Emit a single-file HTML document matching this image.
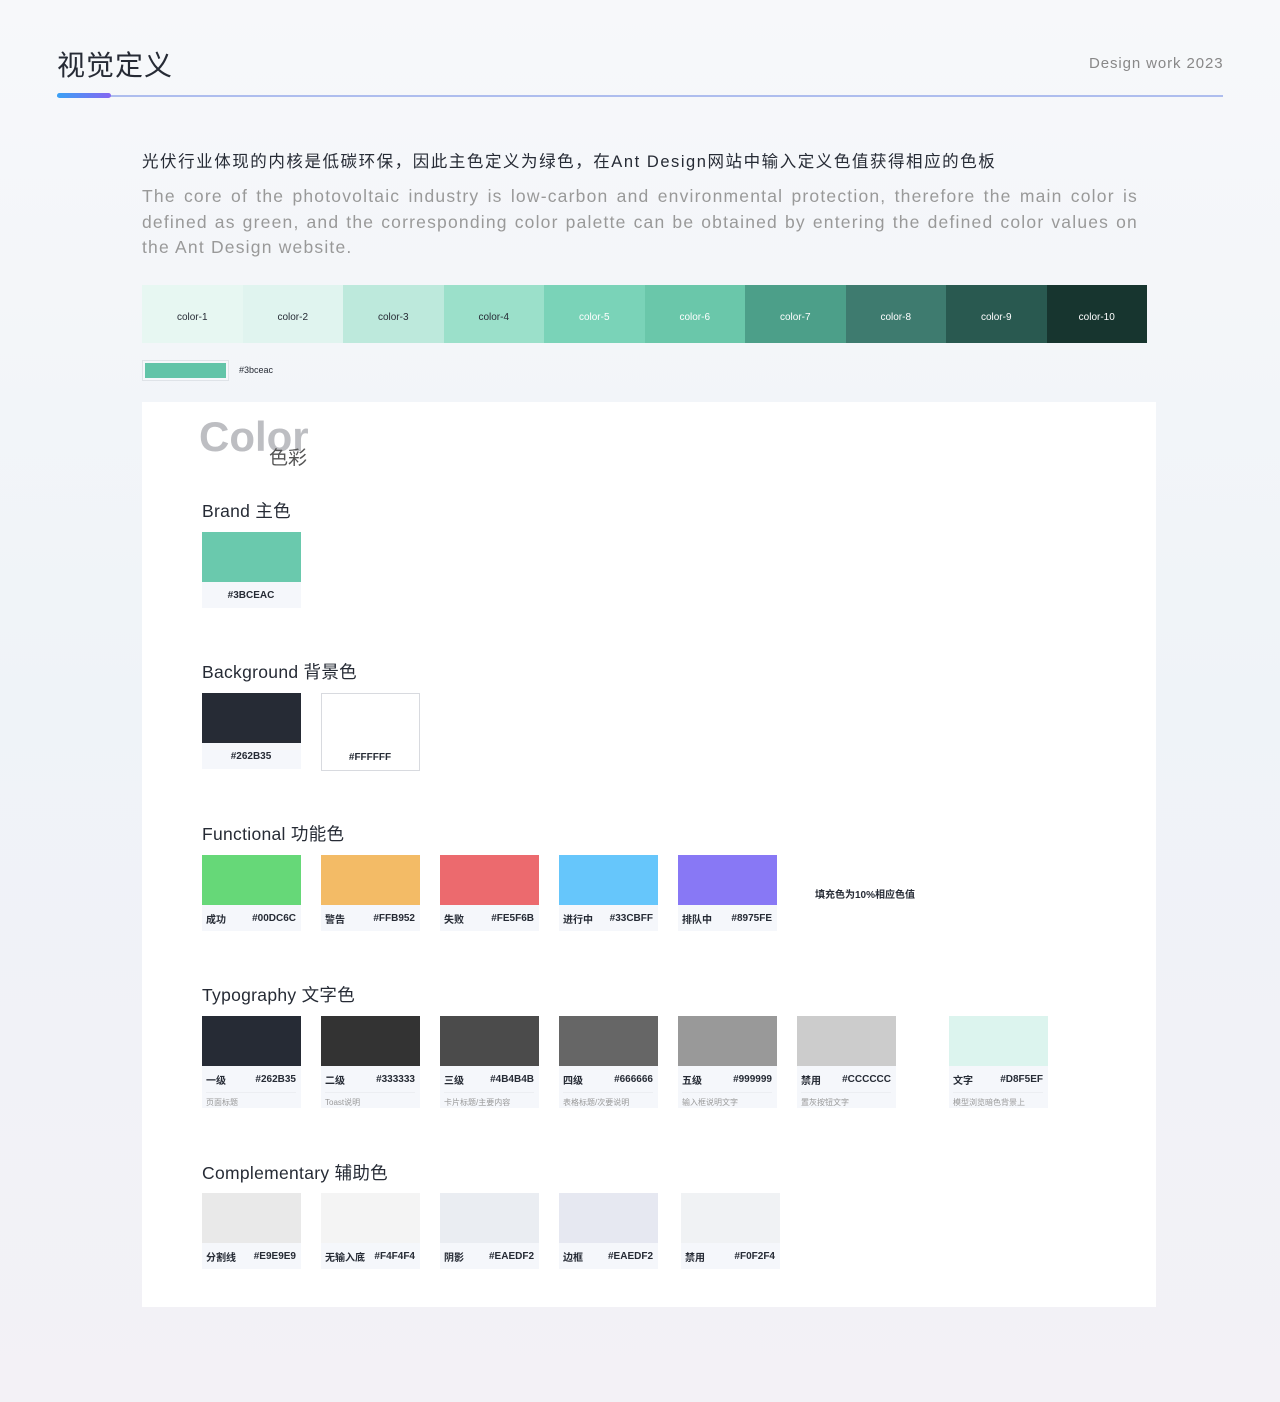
<!DOCTYPE html>
<html><head><meta charset="utf-8"><style>
*{margin:0;padding:0;box-sizing:border-box}
body{width:1280px;height:1402px;position:relative;background:linear-gradient(180deg,#f7f8fa 0%,#eff3f8 50%,#f3f1f6 100%);font-family:"Liberation Sans","Noto Sans CJK SC",sans-serif;overflow:hidden;color:#262b35}
.a{position:absolute}
.sw{position:absolute;width:99px}
.sw .c{height:50px}
.sw .l{height:26px;background:#f5f7fb;font-size:10px;font-weight:bold;color:#262b35;display:flex;justify-content:space-between;align-items:center;padding:0 5px 0 4px}
.sw .l2{height:42px;background:#f5f7fb;font-size:10px;font-weight:bold;padding:0 5px 0 4px}
.sw .l2 .t{display:flex;justify-content:space-between;height:27px;align-items:center;border-bottom:1px solid #eceef2}
.sw .l2 .s{font-size:8px;font-weight:normal;color:#999;padding-top:4px}
.h{position:absolute;left:202px;font-size:17.5px;color:#262b35;letter-spacing:.3px}
.pal{position:absolute;left:142px;top:285px;width:1005px;height:58px;display:flex}
.pal div{flex:1;display:flex;align-items:center;justify-content:center;font-size:10px;padding-top:7px}
</style></head><body>
<div class="a" style="left:57px;top:44px;font-size:28px;color:#262b35;letter-spacing:1px">视觉定义</div>
<div class="a" style="left:1089px;top:55px;font-size:15px;color:#888;letter-spacing:.9px">Design work 2023</div>
<div class="a" style="left:57px;top:95px;width:1166px;height:2px;background:#aebdee"></div>
<div class="a" style="left:57px;top:93px;width:54px;height:5px;border-radius:3px;background:linear-gradient(90deg,#3aa1f5,#8566f2)"></div>
<div class="a" style="left:142px;top:148px;font-size:16.5px;color:#262b35;letter-spacing:1.55px">光伏行业体现的内核是低碳环保，因此主色定义为绿色，在Ant Design网站中输入定义色值获得相应的色板</div>
<div class="a" style="left:142px;top:184px;width:996px;font-size:17.5px;line-height:25.5px;color:#999;letter-spacing:1.2px;text-align:justify;text-align-last:left">The core of the photovoltaic industry is low-carbon and environmental protection, therefore the main color is defined as green, and the corresponding color palette can be obtained by entering the defined color values on the Ant Design website.</div>
<div class="pal">
<div style="background:#e7f7f2">color-1</div><div style="background:#e0f4ef">color-2</div><div style="background:#bde9dc">color-3</div><div style="background:#9be0ca">color-4</div><div style="background:#7ad3b8;color:#fff">color-5</div><div style="background:#6ac7aa;color:#fff">color-6</div><div style="background:#4c9f89;color:#fff">color-7</div><div style="background:#3e7b6f;color:#fff">color-8</div><div style="background:#295950;color:#fff">color-9</div><div style="background:#17352f;color:#fff">color-10</div>
</div>
<div class="a" style="left:142px;top:360px;width:87px;height:21px;border:1px solid #dfe3e8;background:#f5f7fa;padding:2px"><div style="width:100%;height:100%;background:#62c4a8"></div></div>
<div class="a" style="left:239px;top:365px;font-size:9px;color:#262b35">#3bceac</div>
<div class="a" style="left:142px;top:402px;width:1014px;height:905px;background:#fff"></div>
<div class="a" style="left:199px;top:413px;font-size:42px;font-weight:bold;color:#bdbec2;letter-spacing:0px">Color</div>
<div class="a" style="left:269px;top:443px;font-size:19px;color:#555">色彩</div>
<div class="h" style="top:498px">Brand 主色</div>
<div class="sw" style="left:202px;top:532px"><div class="c" style="background:#6ac9ad"></div><div class="l" style="justify-content:center">#3BCEAC</div></div>
<div class="h" style="top:659px">Background 背景色</div>
<div class="sw" style="left:202px;top:693px"><div class="c" style="background:#262b35"></div><div class="l" style="justify-content:center">#262B35</div></div>
<div class="sw" style="left:321px;top:693px;border:1px solid #d8dadf"><div class="c" style="background:#fff"></div><div class="l" style="justify-content:center;background:#fff">#FFFFFF</div></div>
<div class="h" style="top:821px">Functional 功能色</div>
<div class="sw" style="left:202px;top:855px"><div class="c" style="background:#66d878"></div><div class="l"><span>成功</span><span>#00DC6C</span></div></div>
<div class="sw" style="left:321px;top:855px"><div class="c" style="background:#f3bb66"></div><div class="l"><span>警告</span><span>#FFB952</span></div></div>
<div class="sw" style="left:440px;top:855px"><div class="c" style="background:#ec6a6e"></div><div class="l"><span>失败</span><span>#FE5F6B</span></div></div>
<div class="sw" style="left:559px;top:855px"><div class="c" style="background:#66c6fb"></div><div class="l"><span>进行中</span><span>#33CBFF</span></div></div>
<div class="sw" style="left:678px;top:855px"><div class="c" style="background:#8878f5"></div><div class="l"><span>排队中</span><span>#8975FE</span></div></div>
<div class="a" style="left:815px;top:886px;font-size:10px;font-weight:bold">填充色为10%相应色值</div>
<div class="h" style="top:982px">Typography 文字色</div>
<div class="sw" style="left:202px;top:1016px"><div class="c" style="background:#262b35"></div><div class="l2"><div class="t"><span>一级</span><span>#262B35</span></div><div class="s">页面标题</div></div></div>
<div class="sw" style="left:321px;top:1016px"><div class="c" style="background:#333"></div><div class="l2"><div class="t"><span>二级</span><span>#333333</span></div><div class="s">Toast说明</div></div></div>
<div class="sw" style="left:440px;top:1016px"><div class="c" style="background:#4b4b4b"></div><div class="l2"><div class="t"><span>三级</span><span>#4B4B4B</span></div><div class="s">卡片标题/主要内容</div></div></div>
<div class="sw" style="left:559px;top:1016px"><div class="c" style="background:#666"></div><div class="l2"><div class="t"><span>四级</span><span>#666666</span></div><div class="s">表格标题/次要说明</div></div></div>
<div class="sw" style="left:678px;top:1016px"><div class="c" style="background:#999"></div><div class="l2"><div class="t"><span>五级</span><span>#999999</span></div><div class="s">输入框说明文字</div></div></div>
<div class="sw" style="left:797px;top:1016px"><div class="c" style="background:#ccc"></div><div class="l2"><div class="t"><span>禁用</span><span>#CCCCCC</span></div><div class="s">置灰按钮文字</div></div></div>
<div class="sw" style="left:949px;top:1016px"><div class="c" style="background:#dcf4ee"></div><div class="l2"><div class="t"><span>文字</span><span>#D8F5EF</span></div><div class="s">模型浏览暗色背景上</div></div></div>
<div class="h" style="top:1160px">Complementary 辅助色</div>
<div class="sw" style="left:202px;top:1193px"><div class="c" style="background:#e9e9e9"></div><div class="l"><span>分割线</span><span>#E9E9E9</span></div></div>
<div class="sw" style="left:321px;top:1193px"><div class="c" style="background:#f4f4f4"></div><div class="l"><span>无输入底</span><span>#F4F4F4</span></div></div>
<div class="sw" style="left:440px;top:1193px"><div class="c" style="background:#eaedf2"></div><div class="l"><span>阴影</span><span>#EAEDF2</span></div></div>
<div class="sw" style="left:559px;top:1193px"><div class="c" style="background:#e6e8f1"></div><div class="l"><span>边框</span><span>#EAEDF2</span></div></div>
<div class="sw" style="left:681px;top:1193px"><div class="c" style="background:#f0f2f4"></div><div class="l"><span>禁用</span><span>#F0F2F4</span></div></div>
</body></html>
